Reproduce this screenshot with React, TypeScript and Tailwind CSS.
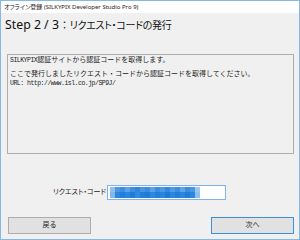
import React from 'react';

const jp = "font-['Noto_Sans','Noto_Sans_CJK_JP',sans-serif]";
const mono = "font-['Liberation_Mono',monospace] text-[6.5px] tracking-[-0.5px]";

// mosaic of the blurred request code
const mosaic = [
  ['bg-[#8fc0ee]', 'bg-[#4b98e2]', 'bg-[#3a8fe0]', 'bg-[#5ba2e5]', 'bg-[#3e90df]', 'bg-[#2f87dc]', 'bg-[#4a97e1]', 'bg-[#3b8edf]', 'bg-[#5aa1e5]', 'bg-[#3a8edf]', 'bg-[#4c99e2]', 'bg-[#3389dd]', 'bg-[#4f9ae3]', 'bg-[#3c8fdf]', 'bg-[#5fa4e6]', 'bg-[#3a8edf]', 'bg-[#4b97e1]', 'bg-[#9cc8f0]'],
  ['bg-[#7fb7ec]', 'bg-[#2f87dc]', 'bg-[#1f7fd9]', 'bg-[#2a85db]', 'bg-[#1d7ed9]', 'bg-[#3389dd]', 'bg-[#247fd9]', 'bg-[#1c7dd8]', 'bg-[#2e87dc]', 'bg-[#2181d9]', 'bg-[#2a85db]', 'bg-[#1b7cd8]', 'bg-[#2c86dc]', 'bg-[#2080d9]', 'bg-[#2a85db]', 'bg-[#1e7ed9]', 'bg-[#2d86dc]', 'bg-[#8cc0ee]'],
];

export default function App() {
  return (
    <div className="w-[300px] h-[240px] border border-[#86b8e6] bg-[#f0f0f0] flex flex-col overflow-hidden">
      {/* title bar */}
      <div className={`h-[12px] bg-white flex items-center pl-[3px] text-[6px] leading-none text-[#222] [font-feature-settings:'palt'] ${jp}`}>
        オフライン登録 (SILKYPIX Developer Studio Pro 9)
      </div>

      {/* header */}
      <div className="h-[41px] pl-[4px] pt-[3px]">
        <div className={`text-[12.3px] leading-[18px] text-[#111] ${jp}`}>
          Step 2 / 3
          <span className="text-[10px] [font-feature-settings:'palt'] tracking-[-0.3px]">
            <span className="mx-[3px]">：</span>リクエスト・コードの発行
          </span>
        </div>
      </div>

      {/* message box */}
      <div className="ml-[6px] w-[287px] h-[100px] border border-[#adadad] bg-[#f0f0f0] pl-[2px] text-[7px] text-[#222] font-['Noto_Sans_CJK_JP',monospace]">
        <div className="h-[9px] leading-[9px]">
          <span className={mono}>SILKYPIX</span>認証サイトから認証コードを取得します。
        </div>
        <div className="mt-[5px] h-[9px] leading-[9px]">ここで発行しましたリクエスト・コードから認証コードを取得してください。</div>
        <div className={`mt-[1px] h-[9px] leading-[9px] ${mono}`}>URL: http://www.isl.co.jp/SP9J/</div>
      </div>

      {/* request code */}
      <div className="mt-[31px] h-[15px] flex items-center">
        <div className={`w-[106px] pr-[1px] text-right text-[7px] text-[#222] [font-feature-settings:'palt'] ${jp}`}>
          リクエスト・コード
        </div>
        <div className="w-[119px] h-[15px] border border-[#7eb4ea] bg-white pl-[2px] pt-[1px]">
          <div className="w-[90px] grid grid-cols-[repeat(18,5px)] grid-rows-[5px_6px]">
            {mosaic.flat().map((c, i) => (
              <div key={i} className={c} />
            ))}
          </div>
        </div>
      </div>

      {/* buttons */}
      <div className="mt-[17px] h-[17px] flex justify-between pl-[7px] pr-[5px]">
        <button className={`w-[83px] h-[17px] border border-[#adadad] bg-[#e1e1e1] text-[7px] text-[#222] ${jp}`}>
          戻る
        </button>
        <button className={`w-[83px] h-[17px] border border-[#3c8fde] bg-[#e1e1e1] text-[7px] text-[#222] ${jp}`}>
          次へ
        </button>
      </div>
    </div>
  );
}
